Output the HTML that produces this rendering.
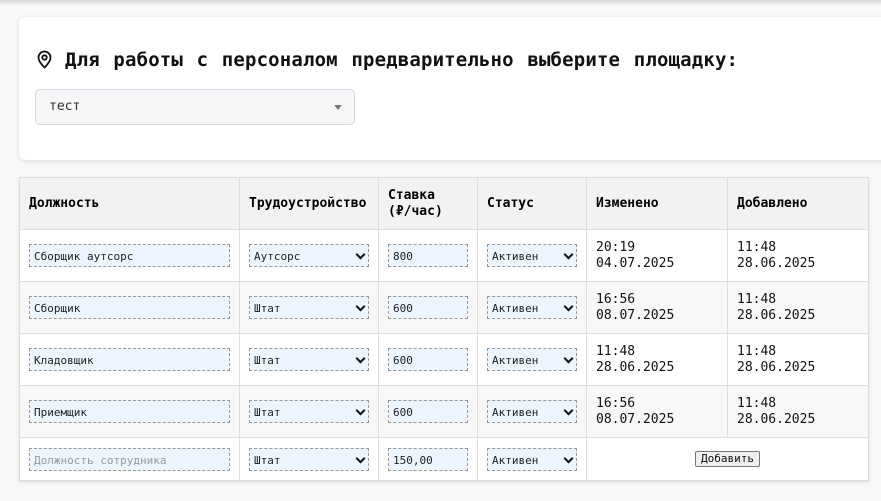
<!DOCTYPE html>
<html><head><meta charset="utf-8"><style>
*{box-sizing:border-box}
body{margin:0;width:881px;height:501px;overflow:hidden;background:#f8f8f8;font-family:"DejaVu Sans Mono","Liberation Mono",monospace;position:relative}
.top{position:absolute;left:0;top:0;width:881px;height:6px;background:linear-gradient(#d8d8d8,#f8f8f8)}
.card{position:absolute;left:19px;top:17px;width:880px;height:143px;background:#fff;border-radius:6px;box-shadow:0 1px 4px rgba(0,0,0,.12)}
.title{position:absolute;left:36px;top:49px;font-size:19px;font-weight:bold;color:#111;white-space:nowrap;word-spacing:2px;letter-spacing:0.16px}
.title svg{position:absolute;left:0;top:1px}
.title span{position:absolute;left:29px;top:0}
.sel{position:absolute;left:35px;top:89px;width:320px;height:36px;border:1px solid #d4d7dc;border-radius:5px;background:#f5f6f8;font-size:13px;color:#333;padding:9px 13px}
.sel:after{content:"";position:absolute;right:12px;top:15px;border:4px solid transparent;border-top:5px solid #777}
table{position:absolute;left:19px;top:177px;width:849px;border-collapse:collapse;table-layout:fixed;background:#fff;box-shadow:0 1px 3px rgba(0,0,0,.12)}
td,th{border:1px solid #ddd;padding:0 9px;font-size:13px;text-align:left;vertical-align:middle}
th{background:#f2f2f2;font-weight:bold;height:52px;line-height:16px}
td{height:52px;line-height:16px;color:#111}
tr.g td{background:#f8f8f8}
tr.last td{height:43px}
.in{height:23px;border:1px dashed #999;background:#edf6ff;font-size:11px;padding:4px 4px;position:relative;white-space:nowrap;color:#222}
.in.s:after{content:"";position:absolute;right:4px;top:6px;width:5px;height:5px;border-right:2px solid #111;border-bottom:2px solid #111;transform:rotate(45deg)}
.btn{display:inline-block;border:1px solid #777;background:#efefef;font-size:11px;padding:0 5px;line-height:14px;border-radius:2px}
</style></head><body>
<div class="top"></div>
<div class="card"></div>
<div class="title"><svg width="17" height="19" viewBox="0 0 17 19"><path d="M8.5 1.5a6 6 0 0 0-6 6c0 4.5 6 10 6 10s6-5.5 6-10a6 6 0 0 0-6-6z" fill="none" stroke="#111" stroke-width="1.8"/><circle cx="8.5" cy="7.5" r="2.2" fill="none" stroke="#111" stroke-width="1.8"/></svg><span>Для работы с персоналом предварительно выберите площадку:</span></div>
<div class="sel">тест</div>
<table>
<colgroup><col style="width:220px"><col style="width:139px"><col style="width:99px"><col style="width:109px"><col style="width:141px"><col style="width:141px"></colgroup>
<tr><th>Должность</th><th>Трудоустройство</th><th>Ставка<br>(₽/час)</th><th>Статус</th><th>Изменено</th><th>Добавлено</th></tr>
<tr><td><div class="in">Сборщик аутсорс</div></td><td><div class="in s">Аутсорс</div></td><td><div class="in">800</div></td><td><div class="in s">Активен</div></td><td>20:19<br>04.07.2025</td><td>11:48<br>28.06.2025</td></tr>
<tr class="g"><td><div class="in">Сборщик</div></td><td><div class="in s">Штат</div></td><td><div class="in">600</div></td><td><div class="in s">Активен</div></td><td>16:56<br>08.07.2025</td><td>11:48<br>28.06.2025</td></tr>
<tr><td><div class="in">Кладовщик</div></td><td><div class="in s">Штат</div></td><td><div class="in">600</div></td><td><div class="in s">Активен</div></td><td>11:48<br>28.06.2025</td><td>11:48<br>28.06.2025</td></tr>
<tr class="g"><td><div class="in">Приемщик</div></td><td><div class="in s">Штат</div></td><td><div class="in">600</div></td><td><div class="in s">Активен</div></td><td>16:56<br>08.07.2025</td><td>11:48<br>28.06.2025</td></tr>
<tr class="last"><td><div class="in" style="color:#999">Должность сотрудника</div></td><td><div class="in s">Штат</div></td><td><div class="in">150,00</div></td><td><div class="in s">Активен</div></td><td colspan="2" style="text-align:center"><span class="btn">Добавить</span></td></tr>
</table>
</body></html>
